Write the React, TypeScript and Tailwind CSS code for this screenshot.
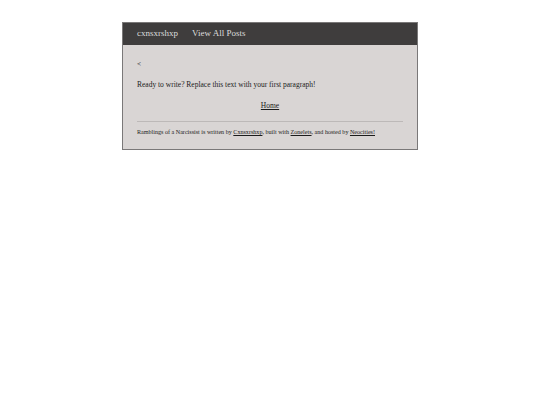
export default function App() {
  return (
    <div className="min-h-[405px] w-full bg-white pt-[22px] font-['Liberation_Serif',serif]">
      <div className="mx-auto w-[296px] border border-[#7a7878] bg-[#d9d5d4]">
        <div className="flex h-[22px] items-center gap-[14px] bg-[#3f3d3d] px-[14px] text-[9px] text-[#dcdcdc]">
          <span>cxnsxrshxp</span>
          <span>View All Posts</span>
        </div>
        <div className="px-[14px] pb-[13px] text-[#1c1c1c]">
          <div className="pt-[14px] text-[7px] leading-[10px]">&lt;</div>
          <p className="mt-[11px] text-[7.5px] leading-[10px]">
            Ready to write? Replace this text with your first paragraph!
          </p>
          <p className="mt-[11px] text-center text-[7.5px] leading-[10px]">
            <a className="underline">Home</a>
          </p>
          <hr className="mt-[10px] border-t border-[#bdb9b8]" />
          <p className="mt-[6px] text-[6.1px] leading-[8px]">
            Ramblings of a Narcissist is written by <a className="underline">Cxnsxrshxp</a>, built with{" "}
            <a className="underline">Zonelets</a>, and hosted by <a className="underline">Neocities!</a>
          </p>
        </div>
      </div>
    </div>
  );
}
